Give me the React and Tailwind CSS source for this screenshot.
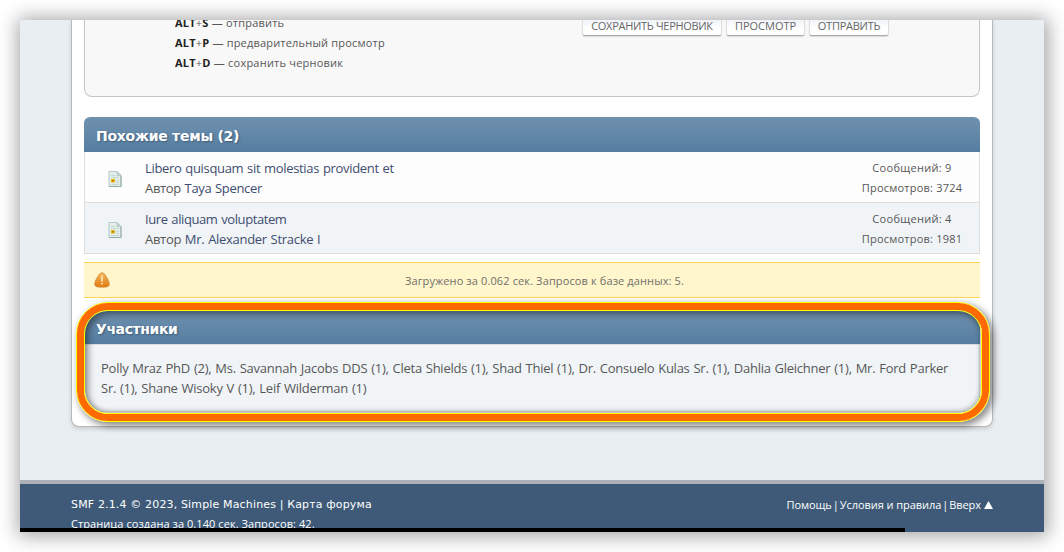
const segoe = "font-['Open_Sans','Noto_Sans',sans-serif]";

function Hotkey({ letter, children, className }) {
  return (
    <li className={`h-5 whitespace-nowrap leading-5 ${className}`}>
      <b className="font-bold text-[#222]">ALT</b>+<b className="font-bold text-[#222]">{letter}</b> — {children}
    </li>
  );
}

function FormButton({ children, className }) {
  return (
    <button
      className={`flex h-6 items-center justify-center whitespace-nowrap rounded-[3px] border border-[#ddd] border-b-[#aaa] bg-linear-to-b from-[#e2e9f3] to-white to-70% pt-[4px] text-[11px] uppercase text-[#666] shadow-[0_1px_1px_rgba(0,0,0,0.12)] ${className}`}
    >
      {children}
    </button>
  );
}

function PostIcon() {
  return (
    <svg width="14" height="18" viewBox="0 0 14 18">
      <path d="M1 1.5h8l4 4v11H1z" fill="#e3eeec" stroke="#b4c8c5" />
      <path d="M1 16.5h12V6" fill="none" stroke="#93a9a7" />
      <path d="M9 1.5v4h4z" fill="#c3d6d3" stroke="#a9bfbc" strokeWidth=".7" />
      <path d="M3 5.5h4M3 7.5h8M8 10.5h3M8 12.5h3M3 14.5h8" stroke="#c6d7d4" />
      <rect x="3" y="9" width="4" height="3.5" fill="#e8bb10" />
      <rect x="4" y="10" width="1.5" height="1.5" fill="#a96d00" />
    </svg>
  );
}

function WarnIcon() {
  return (
    <svg width="16" height="16" viewBox="0 0 16 16">
      <defs>
        <linearGradient id="warn" x1="0" y1="0" x2="0" y2="1">
          <stop offset="0" stopColor="#f3b95c" />
          <stop offset="1" stopColor="#e27c14" />
        </linearGradient>
      </defs>
      <path
        d="M8 .8C9.3.8 10.300 1.500 11.300 3.100c1.700 2.500 4 6.400 4 8.800 0 1.900-1 2.700-2.700 3-2.700.4-6.500.4-9.200 0C1.700 14.600.7 13.800.7 11.900c0-2.400 2.300-6.300 4-8.800C5.700 1.500 6.700.8 8 .8z"
        fill="url(#warn)"
        stroke="#cf8a3c"
        strokeWidth=".7"
      />
      <path d="M8 4v5" stroke="#fff0d0" strokeWidth="1.500" strokeLinecap="round" />
      <circle cx="8" cy="11.600" r=".9" fill="#fff0d0" />
    </svg>
  );
}

function CategoryBar({ children, className }) {
  return (
    <h3
      className={`flex items-center bg-linear-to-b from-[#7091b0] to-[#557ea0] pl-3 font-['DejaVu_Sans',sans-serif] text-sm font-bold text-white [text-shadow:1px_1px_2px_#3e5a78] ${className}`}
    >
      {children}
    </h3>
  );
}

function Topic({ title, titleClass, author, authorClass, replies, views, className }) {
  return (
    <div className={`flex border-x border-b border-[#ddd] ${className}`}>
      <div className="flex w-[60px] items-center justify-center pt-1">
        <PostIcon />
      </div>
      <div className="flex-1 whitespace-nowrap pt-[6px] text-[13px] leading-5">
        <div className={`text-[#3f4d70] ${titleClass}`}>{title}</div>
        <div className={authorClass}>
          Автор <span className="text-[#3f4d70]">{author}</span>
        </div>
      </div>
      <div className="w-[134px] pt-[6px] text-center text-[11px] leading-5">
        <div className="tracking-[0.3px]">Сообщений: {replies}</div>
        <div className="tracking-[0.2px]">Просмотров: {views}</div>
      </div>
    </div>
  );
}

export default function App() {
  return (
    <div className={`h-[552px] w-[1064px] overflow-hidden bg-white p-5 text-[#575757] ${segoe}`}>
      <div className="h-[512px] w-[1024px] shadow-[1px_1px_18px_3px_rgba(0,0,0,0.36)]">
        <div className="relative flex h-full flex-col overflow-hidden bg-[#e9eef2]">
          <main className="ml-[51px] h-[407px] w-[922px] shrink-0 rounded-b-lg border border-t-0 border-[#b8b8b8] bg-white px-3 shadow-[0_2px_4px_rgba(0,0,0,0.14)]">
            <section className="flex h-[77px] justify-between rounded-b-lg border border-t-0 border-[#c5c5c5] bg-[#f8f8f8] pl-[90px] pr-[90px]">
              <ul className="-mt-[7px] text-[11px]">
                <Hotkey letter="S" className="tracking-[0.21px]">отправить</Hotkey>
                <Hotkey letter="P" className="tracking-[0.19px]">предварительный просмотр</Hotkey>
                <Hotkey letter="D" className="tracking-[0.22px]">сохранить черновик</Hotkey>
              </ul>
              <div className="-mt-2 flex gap-1">
                <FormButton className="w-[140px] tracking-[-0.3px]">Сохранить черновик</FormButton>
                <FormButton className="w-[79px]">Просмотр</FormButton>
                <FormButton className="w-[80px] tracking-[-0.25px]">Отправить</FormButton>
              </div>
            </section>

            <section className="mt-5">
              <CategoryBar className="h-[35px] rounded-t-md pt-[3px] tracking-[-0.25px]">Похожие темы (2)</CategoryBar>
              <Topic
                className="h-[51px] bg-[#fdfdfd]"
                title="Libero quisquam sit molestias provident et"
                titleClass="tracking-[-0.33px] [word-spacing:0.8px]"
                author="Taya Spencer"
                authorClass="tracking-[-0.33px] [word-spacing:0.6px]"
                replies="9"
                views="3724"
              />
              <Topic
                className="h-[51px] bg-[#f0f4f7]"
                title="Iure aliquam voluptatem"
                titleClass="tracking-[-0.41px] [word-spacing:0.8px]"
                author="Mr. Alexander Stracke I"
                authorClass="tracking-[-0.3px] [word-spacing:0.7px]"
                replies="4"
                views="1981"
              />
            </section>

            <div className="mt-2 flex h-9 items-center border-y border-[#ffd65a] bg-[#fff6cc] pl-[10px] text-[11px] text-[#6f6f6a]">
              <WarnIcon />
              <p className="flex-1 whitespace-nowrap pr-px pt-[3px] text-center tracking-[0.12px]">
                Загружено за 0.062 сек. Запросов к базе данных: 5.
              </p>
            </div>

            <section className="mt-3">
              <CategoryBar className="h-[34px] rounded-t-md pt-[3px] tracking-[-0.4px]">Участники</CategoryBar>
              <div className="h-[68px] border border-[#ddd] bg-[#f0f4f7] pl-4 pt-[13px] text-[13px] leading-5 tracking-[-0.25px] [word-spacing:0.75px]">
                <p className="whitespace-nowrap">
                  Polly Mraz PhD (2), Ms. Savannah Jacobs DDS (1), Cleta Shields (1), Shad Thiel (1), Dr. Consuelo Kulas Sr. (1), Dahlia Gleichner (1), Mr. Ford Parker
                </p>
                <p className="whitespace-nowrap">Sr. (1), Shane Wisoky V (1), Leif Wilderman (1)</p>
              </div>
            </section>
          </main>

          <footer className="mt-[53px] flex flex-1 justify-between border-t-4 border-[#acb1b8] bg-[#3e5a78] pl-[51px] pr-[51px] text-[11px] leading-5 text-white">
            <div className="whitespace-nowrap pt-[11px]">
              <p className="font-['DejaVu_Sans',sans-serif] tracking-[0.15px]">SMF 2.1.4 © 2023, Simple Machines | Карта форума</p>
              <p className="-mt-px tracking-[0.07px]">Страница создана за 0.140 сек. Запросов: 42.</p>
            </div>
            <div className="flex h-5 items-center whitespace-nowrap pt-[21px] tracking-[-0.06px]">
              <span>Помощь</span>
              <span className="mx-px">|</span>
              <span>Условия и правила</span>
              <span className="mx-px">|</span>
              <span>Вверх</span>
              <svg className="ml-[3px]" width="9" height="8" viewBox="0 0 9 8">
                <path d="M4.500 0L9 8H0z" fill="#fff" />
              </svg>
            </div>
          </footer>

          <div className="absolute bottom-0 left-0 h-1 w-[885px] bg-black" />

          <div className="absolute left-[56px] top-[282px] h-[120px] w-[914px] rounded-[32px] border border-[#ffff00] shadow-[3px_3px_7px_1px_rgba(0,0,0,0.45)]">
            <div className="h-full w-full rounded-[31px] border-[7px] border-[#ff6a00]">
              <div className="h-full w-full rounded-[24px] border border-[#ffff00] shadow-[inset_3px_3px_7px_rgba(0,0,0,0.42),inset_-1px_-2px_5px_rgba(0,0,0,0.22)]" />
            </div>
          </div>
        </div>
      </div>
    </div>
  );
}
